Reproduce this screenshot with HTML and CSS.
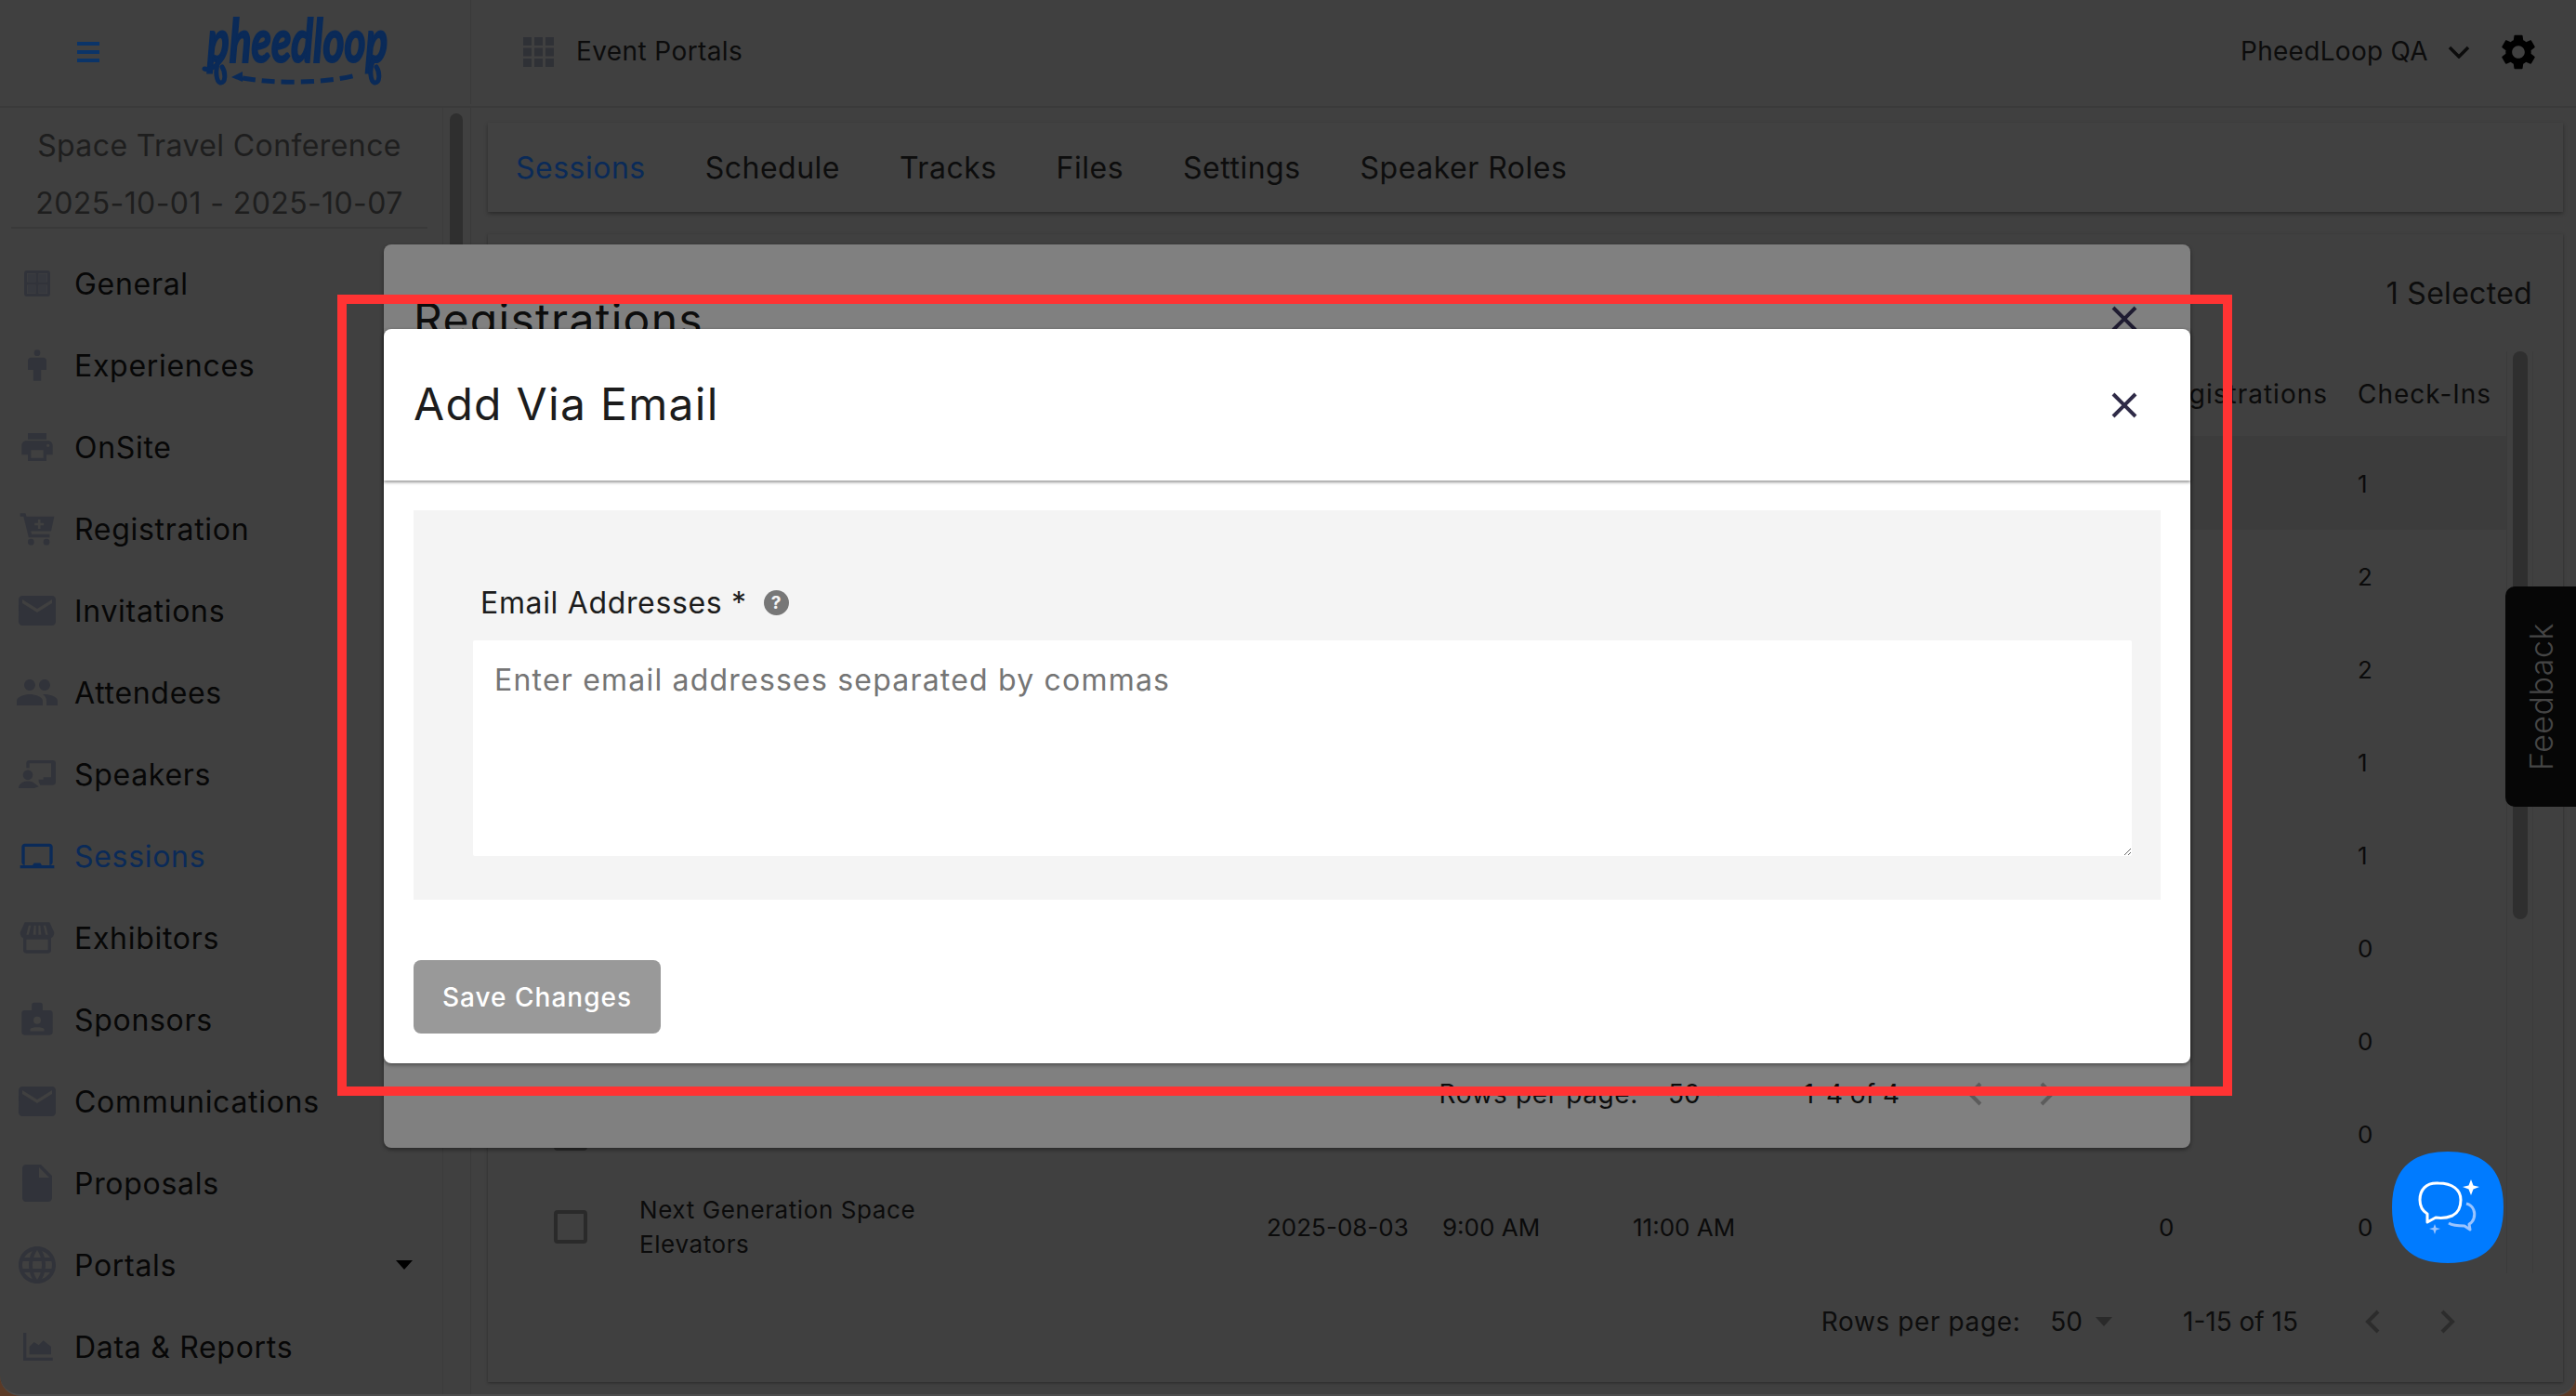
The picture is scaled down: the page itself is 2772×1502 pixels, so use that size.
FILE: index.html
```html
<!DOCTYPE html>
<html lang="en">

<head>
    <meta charset="UTF-8">
    <meta name="viewport" content="width=device-width, initial-scale=1.0">
    <title>Add Via Email</title>
    <link rel="stylesheet" href="styles.css">
</head>

<body>
    <div class="app">
        <header class="topbar">
            <div class="brand">
                <svg class="menu-icon" viewBox="0 0 24 22"><path d="M0 0h24v4H0zM0 9h24v4H0zM0 18h24v4H0z"/></svg>
                <svg class="logo" viewBox="0 0 220 80">
                    <text class="logo-text" x="14" y="34.500" transform="scale(1 1.47)">pheedloop</text>
                    <path class="logo-tail" d="M11 58C18 60 26 54 30 46M26 50C22 60 24 72 28 73C34 74 34 62 30 56M192 50C188 60 190 72 194 73C200 74 200 62 196 56"/>
                    <path class="logo-head" d="M40 67l12-6v11z"/>
                    <path class="logo-dash" d="M52 68C85 74 140 74 174 65"/>
                </svg>
            </div>
            <div class="topbar-nav">
                <svg class="apps-icon" viewBox="0 0 33 32"><path d="M0 0h9v9H0zM12 0h9v9h-9zM24 0h9v9h-9zM0 11.500h9v9H0zM12 11.500h9v9h-9zM24 11.500h9v9h-9zM0 23h9v9H0zM12 23h9v9h-9zM24 23h9v9h-9z"/></svg>
                <span>Event Portals</span>
            </div>
            <div class="topbar-user">
                <span>PheedLoop QA</span>
                <svg class="user-chevron" viewBox="0 0 24 14"><path d="M2 2l10 10L22 2"/></svg>
                <svg class="gear" viewBox="2 2 20 20"><path d="M19.14 12.94c.04-.3.06-.61.06-.94 0-.32-.02-.64-.07-.94l2.030-1.580c.18-.14.23-.41.12-.61l-1.920-3.320c-.12-.22-.37-.29-.59-.22l-2.390.96c-.5-.38-1.030-.7-1.620-.94l-.36-2.540c-.04-.24-.24-.41-.48-.41h-3.840c-.24 0-.43.17-.47.41l-.36 2.540c-.59.24-1.130.57-1.620.94l-2.390-.96c-.22-.08-.47 0-.59.22L2.740 8.870c-.12.21-.08.47.12.61l2.030 1.580c-.05.3-.09.63-.09.94s.02.64.07.94l-2.030 1.580c-.18.14-.23.41-.12.61l1.920 3.320c.12.22.37.29.59.22l2.390-.96c.5.38 1.030.7 1.620.94l.36 2.540c.05.24.24.41.48.41h3.840c.24 0 .44-.17.47-.41l.36-2.540c.59-.24 1.130-.56 1.620-.94l2.390.96c.22.08.47 0 .59-.22l1.920-3.320c.12-.22.07-.47-.12-.61l-2.010-1.580zM12 15.600c-1.980 0-3.600-1.620-3.600-3.600s1.620-3.600 3.600-3.600 3.600 1.620 3.600 3.600-1.620 3.600-3.600 3.600z"/></svg>
            </div>
        </header>

        <div class="layout">
            <aside class="sidebar">
                <div class="event-info">
                    <div>Space Travel Conference</div>
                    <div>2025-10-01 - 2025-10-07</div>
                </div>
                <ul class="side-nav">
                    <li><svg viewBox="-6 -6 40 40"><path fill-rule="evenodd" d="M3 0h22a3 3 0 0 1 3 3v22a3 3 0 0 1-3 3H3a3 3 0 0 1-3-3V3a3 3 0 0 1 3-3zM3 3v9.500h9.500V3zM15.500 3v9.500H25V3zM3 15.500V25h9.500v-9.500zM15.500 15.500V25H25v-9.500z"/><path class="icon-fill" d="M3.500 3.500h9v9h-9zM15.500 3.500h9v9h-9zM3.500 15.500h9v9h-9zM15.500 15.500h9v9h-9z"/></svg>General</li>
                    <li><svg viewBox="0 0 24 24"><path d="M16 7H8c-1.100 0-2 .9-2 2v6h3.500v7h5v-7H18V9c0-1.100-.9-2-2-2z"/><circle cx="12" cy="4" r="2"/></svg>Experiences</li>
                    <li><svg viewBox="0 0 24 24"><path d="M19 8H5c-1.660 0-3 1.340-3 3v6h4v4h12v-4h4v-6c0-1.660-1.340-3-3-3zm-3 11H8v-5h8v5zm3-7c-.55 0-1-.45-1-1s.45-1 1-1 1 .45 1 1-.45 1-1 1zm-1-9H6v4h12V3z"/></svg>OnSite</li>
                    <li><svg viewBox="0 0 24 24"><path fill-rule="evenodd" d="M1 2h3.500l.6 2H23l-2 9.500H8l.4 2H20v2H6.500L3.200 4H1zM12.500 6v2.200h-2.200v1.600h2.200V12h1.600V9.800h2.200V8.200h-2.200V6z"/><circle cx="8" cy="20.500" r="2"/><circle cx="18" cy="20.500" r="2"/></svg>Registration</li>
                    <li><svg viewBox="2 4 20 16"><path d="M20 4H4c-1.100 0-1.990.9-1.990 2L2 18c0 1.100.9 2 2 2h16c1.100 0 2-.9 2-2V6c0-1.100-.9-2-2-2zm0 4l-8 5-8-5V6l8 5 8-5v2z"/></svg>Invitations</li>
                    <li><svg viewBox="2 2 20 20"><path d="M16 11c1.660 0 2.990-1.340 2.990-3S17.660 5 16 5c-1.660 0-3 1.340-3 3s1.340 3 3 3zm-8 0c1.660 0 2.990-1.340 2.990-3S9.660 5 8 5C6.340 5 5 6.340 5 8s1.340 3 3 3zm0 2c-2.330 0-7 1.170-7 3.500V19h14v-2.500c0-2.330-4.670-3.500-7-3.500zm8 0c-.29 0-.62.02-.97.05 1.160.84 1.970 1.970 1.970 3.450V19h6v-2.500c0-2.330-4.670-3.500-7-3.500z"/></svg>Attendees</li>
                    <li><svg viewBox="0 0 24 24"><path d="M7 3h15a2 2 0 0 1 2 2v12a2 2 0 0 1-2 2h-8l-1-2v-1.500h3V14h5V5H7v3H5V5a2 2 0 0 1 2-2z"/><circle cx="6" cy="12.500" r="3.200"/><path d="M0 21c0-3 3-4.500 6-4.500 1.500 0 3 .4 4 1.200L13 20l-3 1z"/></svg>Speakers</li>
                    <li class="active"><svg viewBox="0 0 24 24"><path d="M20 18c1.100 0 1.990-.9 1.990-2L22 6c0-1.100-.9-2-2-2H4c-1.100 0-2 .9-2 2v10c0 1.100.9 2 2 2H1v2h22v-2h-3zM4 6h16v12h-5l-1-1.500h-4L9 18H4V6z"/></svg>Sessions</li>
                    <li><svg viewBox="0 0 24 24"><path fill-rule="evenodd" d="M4 2h16l3 6.500c0 2-1 3.200-2 3.700V20a2 2 0 0 1-2 2H5a2 2 0 0 1-2-2v-7.800c-1-.5-2-1.700-2-3.700zM5 13v7h14v-7zM6.500 4 5 10h1.500L8 4zM10 4l-.6 6h1.800V4zM12.800 4v6h1.800L14 4zM16 4l1.500 6H19l-1.500-6z"/></svg>Exhibitors</li>
                    <li><svg viewBox="0 0 24 24"><path fill-rule="evenodd" d="M10 1h4a1.500 1.500 0 0 1 1.500 1.500V6H20a2 2 0 0 1 2 2v12a2 2 0 0 1-2 2H4a2 2 0 0 1-2-2V8a2 2 0 0 1 2-2h4.500V2.500A1.500 1.500 0 0 1 10 1zM12 10a2.400 2.400 0 1 0 0 4.800A2.400 2.400 0 0 0 12 10zM7.500 18v1.500h9V18c-1-1.500-8-1.500-9 0z"/></svg>Sponsors</li>
                    <li><svg viewBox="2 4 20 16"><path d="M20 4H4c-1.100 0-1.990.9-1.990 2L2 18c0 1.100.9 2 2 2h16c1.100 0 2-.9 2-2V6c0-1.100-.9-2-2-2zm0 4l-8 5-8-5V6l8 5 8-5v2z"/></svg>Communications</li>
                    <li><svg viewBox="2 2 20 20"><path d="M6 2c-1.100 0-1.990.9-1.990 2L4 20c0 1.100.89 2 1.990 2H18c1.100 0 2-.9 2-2V8l-6-6H6zm7 7V3.500L18.500 9H13z"/></svg>Proposals</li>
                    <li><svg viewBox="2 2 20 20"><path d="M11.990 2C6.470 2 2 6.480 2 12s4.470 10 9.990 10C17.520 22 22 17.520 22 12S17.520 2 11.990 2zm6.930 6h-2.950c-.32-1.250-.78-2.450-1.380-3.560 1.840.63 3.370 1.910 4.330 3.560zM12 4.040c.83 1.200 1.480 2.530 1.910 3.960h-3.820c.43-1.430 1.080-2.760 1.910-3.960zM4.260 14C4.100 13.360 4 12.690 4 12s.1-1.360.26-2h3.380c-.08.66-.14 1.320-.14 2 0 .68.06 1.340.14 2H4.260zm.82 2h2.950c.32 1.250.78 2.450 1.380 3.560-1.840-.63-3.370-1.900-4.330-3.560zm2.950-8H5.080c.96-1.660 2.490-2.930 4.330-3.560C8.810 5.550 8.350 6.750 8.030 8zM12 19.960c-.83-1.200-1.480-2.530-1.910-3.960h3.820c-.43 1.430-1.080 2.760-1.910 3.960zM14.340 14H9.660c-.09-.66-.16-1.320-.16-2 0-.68.07-1.350.16-2h4.680c.09.65.16 1.320.16 2 0 .68-.07 1.340-.16 2zm.25 5.560c.6-1.110 1.060-2.310 1.380-3.560h2.950c-.96 1.650-2.490 2.930-4.330 3.560zM16.360 14c.08-.66.14-1.320.14-2 0-.68-.06-1.340-.14-2h3.380c.16.64.26 1.310.26 2s-.1 1.360-.26 2h-3.380z"/></svg>Portals<span class="caret"></span></li>
                    <li><svg viewBox="0 0 24 24"><path d="M3 3h2v16h17v2H3z"/><path d="M7 17v-5l3-3 3 2 3-3 5 4v5z"/></svg>Data &amp; Reports</li>
                </ul>
            </aside>
            <div class="side-scroll"><div class="side-thumb"></div></div>

            <main class="main">
                <nav class="tabs">
                    <a class="active" href="#">Sessions</a>
                    <a href="#">Schedule</a>
                    <a href="#">Tracks</a>
                    <a href="#">Files</a>
                    <a href="#">Settings</a>
                    <a href="#">Speaker Roles</a>
                </nav>
                <section class="card">
                    <div class="card-tools">1 Selected</div>
                    <div class="table-wrap">
                        <div class="table">
                            <div class="row head"><span></span><span></span><span></span><span></span><span></span><span class="col-reg">Registrations</span><span>Check-Ins</span></div>
                            <div class="row picked"><i class="check"></i><span></span><span></span><span></span><span></span><span></span><span>1</span></div>
                            <div class="row"><i class="check"></i><span></span><span></span><span></span><span></span><span></span><span>2</span></div>
                            <div class="row"><i class="check"></i><span></span><span></span><span></span><span></span><span></span><span>2</span></div>
                            <div class="row"><i class="check"></i><span></span><span></span><span></span><span></span><span></span><span>1</span></div>
                            <div class="row"><i class="check"></i><span></span><span></span><span></span><span></span><span></span><span>1</span></div>
                            <div class="row"><i class="check"></i><span></span><span></span><span></span><span></span><span></span><span>0</span></div>
                            <div class="row"><i class="check"></i><span></span><span></span><span></span><span></span><span></span><span>0</span></div>
                            <div class="row"><i class="check"></i><span></span><span></span><span></span><span></span><span></span><span>0</span></div>
                            <div class="row"><i class="check"></i><span class="name">Next Generation Space Elevators</span><span>2025-08-03</span><span>9:00 AM</span><span>11:00 AM</span><span>0</span><span>0</span></div>
                        </div>
                        <div class="table-scroll"><div class="table-thumb"></div></div>
                    </div>
                    <div class="pager">
                        <span class="pager-label">Rows per page:</span>
                        <span class="pager-size">50</span><span class="pager-caret"></span>
                        <span class="pager-range">1-15 of 15</span>
                        <svg class="pager-arrow" viewBox="0 0 16 26"><path d="M14 2L3 13l11 11"/></svg>
                        <svg class="pager-arrow next" viewBox="0 0 16 26"><path d="M2 2l11 11L2 24"/></svg>
                    </div>
                </section>
            </main>
        </div>

        <!-- first dialog, dimmed by the one on top of it -->
        <div class="dialog dialog-back">
            <div class="dialog-top">
                <h2>Registrations</h2>
                <svg class="close" viewBox="0 0 28 28"><path d="M2 2l24 24M26 2L2 26"/></svg>
            </div>
            <div class="pager back-pager">
                <span class="pager-label">Rows per page:</span>
                <span class="pager-size">50</span><span class="pager-caret"></span>
                <span class="pager-range">1-4 of 4</span>
                <svg class="pager-arrow" viewBox="0 0 16 26"><path d="M14 2L3 13l11 11"/></svg>
                <svg class="pager-arrow next" viewBox="0 0 16 26"><path d="M2 2l11 11L2 24"/></svg>
            </div>
        </div>

        <div class="dialog dialog-front">
            <div class="dialog-head">
                <h2>Add Via Email</h2>
                <svg class="close" viewBox="0 0 28 28"><path d="M2 2l24 24M26 2L2 26"/></svg>
            </div>
            <div class="dialog-body">
                <form class="form-panel">
                    <label class="form-label" for="emails">Email Addresses *
                        <svg class="help" viewBox="0 0 28 28"><circle cx="14" cy="14" r="14"/><text x="14" y="21" text-anchor="middle">?</text></svg>
                    </label>
                    <textarea id="emails" placeholder="Enter email addresses separated by commas"></textarea>
                </form>
                <button class="save-btn" type="button">Save Changes</button>
            </div>
        </div>

        <div class="red-frame"></div>

        <div class="feedback"><span>Feedback</span></div>
        <div class="chat-btn">
            <svg viewBox="0 0 120 120">
                <path class="chat-bg" d="M60 0C100 0 120 20 120 60S100 120 60 120 0 100 0 60 20 0 60 0z"/>
                <path class="chat-main" d="M50 34C36 33 30 42 30 52c0 7 3 12 8 15l0 9 9-5c7 1 13 0 18-2 6-3 9-9 9-17 0-11-9-18-24-18z"/>
                <path class="chat-second" d="M80 56c8 2 10 10 8 16-1 3-3 5-5 6l1 6-6-4c-6 0-12 0-17-3"/>
                <path class="chat-star" d="M85 30l2.500 6.500L94 38l-6.500 2.500L85 47l-2.500-6.500L76 38l6.500-1.500z"/>
                <path class="chat-star small" d="M46 78l1.500 4L52 83l-4.500 1.500L46 89l-1.500-4.500L40 83l4.500-1z"/>
            </svg>
        </div>
    </div>
</body>

</html>
```
FILE: styles.css
```css
* {
    margin: 0;
    padding: 0;
    box-sizing: border-box;
}

html,
body {
    width: 2772px;
    height: 1502px;
    overflow: hidden;
    background: #5b3a26;
}

body {
    font-family: "Inter", "Liberation Sans", sans-serif;
    color: #0a0a0a;
}

.app {
    position: relative;
    width: 2772px;
    height: 1502px;
    background: #404040;
    border-bottom: 2px solid #4c4c4c;
    border-radius: 0 0 22px 22px;
    overflow: hidden;
}

/* top bar */
.topbar {
    height: 116px;
    display: flex;
    align-items: center;
    padding-bottom: 3px;
    border-bottom: 2px solid #3a3a3a;
}

.brand {
    width: 507px;
    height: 113px;
    display: flex;
    align-items: center;
    border-right: 1px solid #3a3a3a;
    padding-left: 83px;
}

.menu-icon {
    width: 24px;
    height: 22px;
    fill: #0b3468;
}

.logo {
    width: 220px;
    height: 80px;
    margin-left: 102px;
    overflow: visible;
}

.logo-text {
    font-family: "Lato", sans-serif;
    font-style: italic;
    font-weight: 700;
    font-size: 44px;
    fill: #0a2a58;
    stroke: #0a2a58;
    stroke-width: 1.500px;
}

.logo-tail {
    fill: none;
    stroke: #0a2a58;
    stroke-width: 5px;
    stroke-linecap: round;
}

.logo-head {
    fill: #0a2a58;
}

.logo-dash {
    fill: none;
    stroke: #0a2a58;
    stroke-width: 5px;
    stroke-dasharray: 14 7;
}

.topbar-nav {
    display: flex;
    align-items: center;
    margin-left: 56px;
    font-size: 28px;
    letter-spacing: .4px;
    color: #0c0c0c;
}

.topbar-nav span,
.topbar-user span {
    margin-bottom: 2px;
}

.apps-icon {
    width: 33px;
    height: 32px;
    margin-right: 24px;
    fill: #2f3136;
}

.topbar-user {
    margin-left: auto;
    padding-right: 43px;
    display: flex;
    align-items: center;
    font-size: 28px;
    letter-spacing: .3px;
    color: #0c0c0c;
}

.user-chevron {
    width: 24px;
    height: 14px;
    margin-left: 21px;
    fill: none;
    stroke: #0c0c0c;
    stroke-width: 3.500px;
}

.gear {
    width: 38px;
    height: 38px;
    margin-left: 33px;
    fill: #000;
}

.layout {
    display: flex;
    height: 1384px;
}

/* sidebar */
.sidebar {
    width: 477px;
    flex-shrink: 0;
    border-right: 1px solid #3b3b3b;
}

.event-info {
    height: 130px;
    margin: 0 16px 0 12px;
    padding-top: 10px;
    text-align: center;
    font-size: 32px;
    letter-spacing: .4px;
    line-height: 62px;
    color: #1e1e1e;
    border-bottom: 2px solid #393939;
}

.side-nav {
    list-style: none;
    padding-top: 15px;
}

.side-nav li {
    height: 88px;
    display: flex;
    align-items: center;
    font-size: 32px;
    letter-spacing: .7px;
    color: #070707;
}

.side-nav li svg {
    width: 40px;
    height: 40px;
    margin: 0 20px 0 20px;
    fill: #31333a;
    overflow: visible;
}

.side-nav li svg .icon-fill {
    fill: #36383e;
}

.side-nav li.active {
    color: #0a2a58;
}

.side-nav li.active svg {
    fill: #0a2a58;
}

.caret {
    margin-left: auto;
    margin-right: 32px;
    border-left: 9px solid transparent;
    border-right: 9px solid transparent;
    border-top: 10px solid #000;
}

.side-scroll {
    width: 30px;
    flex-shrink: 0;
    padding: 6px 8px 0 7px;
    border-right: 1px solid #3a3a3a;
}

.side-thumb {
    height: 300px;
    background: #2f2f2f;
    border-radius: 8px;
}

/* main */
.main {
    flex: 1;
    padding: 16px 14px 0 18px;
    min-width: 0;
}

.tabs {
    height: 96px;
    display: flex;
    align-items: center;
    gap: 64px;
    padding-left: 30px;
    background: #414141;
    box-shadow: 0 2px 4px rgba(0, 0, 0, .35);
}

.tabs a {
    font-size: 32px;
    letter-spacing: .5px;
    color: #0d0d0d;
    text-decoration: none;
}

.tabs a.active {
    color: #0a2a58;
}

.card {
    margin-top: 24px;
    height: 1235px;
    background: #404040;
    box-shadow: 0 1px 3px rgba(0, 0, 0, .35);
}

.card-tools {
    height: 126px;
    display: flex;
    align-items: center;
    justify-content: flex-end;
    padding-right: 33px;
    font-size: 32px;
    letter-spacing: .3px;
    color: #0d0d0d;
}

.table-wrap {
    display: flex;
    height: 992px;
}

.table {
    width: 2172px;
    flex-shrink: 0;
}

.row {
    height: 100px;
    display: grid;
    grid-template-columns: 163px 675px 189px 205px 566px 214px 1fr;
    align-items: center;
    font-size: 26px;
    color: #0b0b0b;
}

.row.head {
    height: 92px;
    font-size: 28px;
    letter-spacing: 1px;
    border-bottom: 1px solid #3c3c3c;
}

.row.picked {
    background: #3c3c3c;
}

.col-reg {
    justify-self: end;
    margin-right: 32px;
}

.check {
    width: 36px;
    height: 36px;
    margin-left: 71px;
    border: 4px solid #2a2a2a;
    border-radius: 4px;
}

.name {
    width: 330px;
    line-height: 37px;
    letter-spacing: .6px;
}

.table-scroll {
    width: 29px;
    border-left: 1px solid #3b3b3b;
    border-right: 1px solid #3b3b3b;
    padding: 0 5px 0 6px;
}

.table-thumb {
    height: 611px;
    background: #2f2f2f;
    border-radius: 8px;
}

.pager {
    display: flex;
    align-items: center;
    justify-content: flex-end;
    height: 104px;
    padding-right: 116px;
    font-size: 28px;
    color: #0d0d0d;
}

.pager-label {
    letter-spacing: .6px;
}

.pager-size {
    margin-left: 32px;
}

.pager-caret {
    margin-left: 14px;
    border-left: 9px solid transparent;
    border-right: 9px solid transparent;
    border-top: 10px solid #2a2a2a;
}

.pager-range {
    margin-left: 76px;
    min-width: 118px;
}

.pager-arrow {
    width: 16px;
    height: 26px;
    margin-left: 72px;
    fill: none;
    stroke: #2c2c2c;
    stroke-width: 4px;
}

.pager-arrow.next {
    margin-left: 65px;
}

/* dialogs */
.dialog {
    position: absolute;
    left: 413px;
    width: 1944px;
    border-radius: 8px;
    box-shadow: 0 2px 4px rgba(0, 0, 0, .4);
}

.dialog h2 {
    font-weight: 400;
    font-size: 48px;
    letter-spacing: 1.300px;
}

.close {
    width: 28px;
    height: 28px;
    fill: none;
    stroke: #2f2b47;
    stroke-width: 4px;
}

.dialog-back {
    top: 263px;
    height: 972px;
    display: flex;
    flex-direction: column;
    background: #808080;
    overflow: hidden;
}

.dialog-top {
    display: flex;
    align-items: center;
    justify-content: space-between;
    height: 50px;
    margin: 55px 57px 0 32px;
}

.dialog-top h2 {
    color: #0d0d0d;
}

.dialog-top .close {
    stroke: #1f1c31;
}

.back-pager {
    margin-top: auto;
    height: 44px;
    margin-bottom: 36px;
    padding-right: 146px;
    color: #0d0d0d;
}

.back-pager .pager-caret {
    border-top-color: #444;
    transform: scale(.5);
    margin-left: 10px;
}

.back-pager .pager-range {
    margin-left: 83px;
    min-width: 102px;
}

.back-pager .pager-arrow {
    stroke: #5c5c5c;
    margin-left: 73px;
}

.back-pager .pager-arrow.next {
    margin-left: 62px;
}

.dialog-front {
    top: 354px;
    height: 790px;
    background: #fff;
}

.dialog-head {
    height: 163px;
    display: flex;
    align-items: center;
    justify-content: space-between;
    padding: 0 57px 0 32px;
    box-shadow: 0 2px 3px rgba(0, 0, 0, .4);
    color: #1c1c1c;
}

.dialog-head h2 {
    margin-bottom: 3px;
}

.dialog-body {
    padding: 32px;
}

.form-panel {
    height: 419px;
    padding: 81px 31px 0 72px;
    background: #f4f4f4;
}

.form-label {
    display: flex;
    align-items: center;
    height: 36px;
    font-size: 32px;
    letter-spacing: .66px;
    color: #1c1c1c;
}

.help {
    width: 27px;
    height: 27px;
    margin-left: 18px;
    fill: #777;
}

.help text {
    fill: #f4f4f4;
    font-size: 20px;
    font-weight: 700;
}

textarea {
    display: block;
    width: 1785px;
    height: 232px;
    margin: 23px 0 0 -8px;
    padding: 24px 23px;
    border: 0;
    border-radius: 2px;
    outline: 0;
    background: #fff;
    font-family: inherit;
    font-size: 32px;
    letter-spacing: 1.200px;
    line-height: 38px;
}

textarea::placeholder {
    color: #757575;
}

.save-btn {
    display: block;
    width: 266px;
    height: 79px;
    margin-top: 65px;
    border: 0;
    border-radius: 8px;
    background: #999;
    color: #fff;
    font-family: inherit;
    font-size: 28px;
    font-weight: 500;
    letter-spacing: 1px;
}

.red-frame {
    position: absolute;
    left: 363px;
    top: 317px;
    width: 2039px;
    height: 862px;
    border: 10px solid #ff3333;
}

.feedback {
    position: absolute;
    right: 0;
    top: 631px;
    width: 76px;
    height: 237px;
    display: flex;
    align-items: center;
    justify-content: center;
    background: #060606;
    border-radius: 10px 0 0 10px;
}

.feedback span {
    writing-mode: vertical-rl;
    transform: rotate(180deg);
    font-size: 34px;
    font-weight: 300;
    letter-spacing: .5px;
    color: #454545;
}

.chat-btn {
    position: absolute;
    left: 2574px;
    top: 1239px;
    width: 120px;
    height: 120px;
}

.chat-bg {
    fill: #007bff;
}

.chat-main {
    fill: none;
    stroke: #fff;
    stroke-width: 3px;
    stroke-linejoin: round;
}

.chat-second {
    fill: none;
    stroke: #99c4ff;
    stroke-width: 3px;
    stroke-linejoin: round;
}

.chat-star {
    fill: #fff;
}

.chat-star.small {
    fill: #99c4ff;
}
```
